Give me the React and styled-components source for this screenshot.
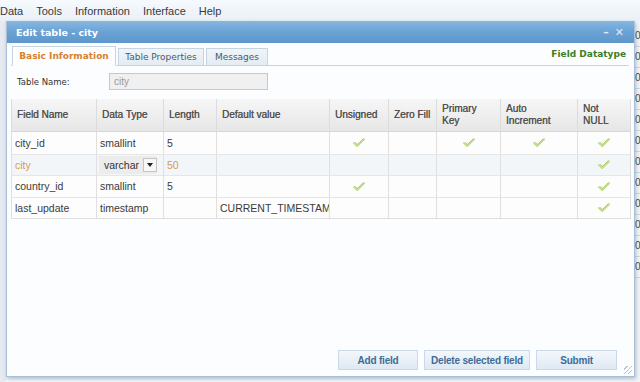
import React from 'react';
import styled, {createGlobalStyle} from 'styled-components';

const GlobalStyle = createGlobalStyle`
  html, body { margin: 0; padding: 0; }
  body {
    font-family: "Liberation Sans", Arial, sans-serif;
    background: #eef3f8;
    overflow: hidden;
  }
`

const Page = styled.div`
  width: 640px;
  height: 382px;
  display: flex;
  flex-direction: column;
  overflow: hidden;
  background: #f4f7fa;
`

const MenuBar = styled.div`
  height: 21px;
  flex: none;
  display: flex;
  align-items: center;
  gap: 13px;
  background: linear-gradient(#f7fafd, #e9f0f7);
  font-size: 11px;
  color: #3a3a3a;
  span { white-space: nowrap; }
`

const Workspace = styled.div`
  flex: 1;
  display: flex;
  min-height: 0;
`

const SideStrip = styled.div`
  width: ${p => p.$w}px;
  flex: none;
  background: ${p => p.$bg};
  display: flex;
  flex-direction: column;
  padding-top: ${p => p.$pt || 0}px;
  font-size: 10px;
  color: #444;
  overflow: hidden;
`

const StripCell = styled.div`
  height: 20px;
  line-height: 20px;
  border-bottom: 1px solid #cfd8e2;
  white-space: nowrap;
`

const Dialog = styled.div`
  position: relative;
  width: 627px;
  flex: none;
  height: 355px;
  display: flex;
  flex-direction: column;
  border: 1px solid #a9bfd6;
  border-top: none;
  background: #fbfdfe;
  box-shadow: 1px 2px 4px rgba(60, 80, 100, 0.35);
`

const TitleBar = styled.div`
  height: 22px;
  flex: none;
  display: flex;
  align-items: center;
  justify-content: space-between;
  padding: 0 10px 0 9px;
  background: linear-gradient(#86b7e0, #6aa2d4 50%, #5d97cb);
  color: #fff;
  font-family: "DejaVu Sans", sans-serif;
  font-weight: bold;
  font-size: 9.5px;
`

const WinButtons = styled.div`
  display: flex;
  gap: 6px;
  font-size: 11px;
  color: #dfeefa;
`

const Body = styled.div`
  flex: 1;
  display: flex;
  flex-direction: column;
  padding: 0 5px 0 4px;
  min-height: 0;
`

const TabStrip = styled.div`
  height: 22px;
  flex: none;
  display: flex;
  align-items: flex-end;
  border-bottom: 1px solid #c6d3e0;
  padding-left: 1px;
`

const Tab = styled.div`
  height: ${p => p.$active ? 20 : 18}px;
  width: ${p => p.$w}px;
  margin-right: 2px;
  margin-bottom: -1px;
  display: flex;
  align-items: center;
  justify-content: center;
  box-sizing: border-box;
  border: 1px solid #c6d3e0;
  border-bottom: ${p => p.$active ? '1px solid #fbfdfe' : '1px solid #c6d3e0'};
  background: ${p => p.$active ? '#fbfdfe' : 'linear-gradient(#f1f5f9, #e4ebf2)'};
  color: ${p => p.$active ? '#d9822b' : '#4a5a6a'};
  font-family: "DejaVu Sans", sans-serif;
  font-size: 9px;
  font-weight: ${p => p.$active ? 'bold' : 'normal'};
`

const TabTitle = styled.div`
  margin-left: auto;
  align-self: center;
  padding-right: 3px;
  color: #3d7d28;
  font-family: "DejaVu Sans", sans-serif;
  font-weight: bold;
  font-size: 9px;
`

const FormRow = styled.div`
  display: flex;
  align-items: center;
  margin-top: 7px;
  padding-left: 6px;
  height: 17px;
`

const Label = styled.label`
  width: 92px;
  font-family: "DejaVu Sans", sans-serif;
  font-size: 8.5px;
  color: #333;
`

const TextInput = styled.div`
  width: 159px;
  height: 17px;
  box-sizing: border-box;
  border: 1px solid #c8c8c8;
  background: #f0f0f0;
  color: #999;
  font-size: 10px;
  line-height: 15px;
  padding-left: 4px;
`

const Grid = styled.div`
  margin-top: 9px;
  width: 619px;
  display: grid;
  grid-template-columns: 85px 67px 53px 113px 59px 48px 64px 77px 53px;
  border-right: 1px solid #dedede;
  border-bottom: 1px solid #dedede;
`

const HeadCell = styled.div`
  height: 33px;
  box-sizing: border-box;
  display: flex;
  align-items: center;
  padding: 0 4px 0 5px;
  border-left: 1px solid #dcdcdc;
  border-bottom: 1px solid #d6d6d6;
  background: linear-gradient(#f6f6f6, #e6e6e6);
  color: #4e4e4e;
  font-size: 10px;
  line-height: 12px;
  white-space: pre;
  text-shadow: 0.3px 0 0 #6a6a6a;
`

const Cell = styled.div`
  height: 21.5px;
  box-sizing: border-box;
  display: flex;
  align-items: center;
  justify-content: ${p => p.$center ? 'center' : 'flex-start'};
  padding: 0 3px;
  border-left: 1px solid #e0e0e0;
  border-top: ${p => p.$first ? 'none' : '1px solid #e6e6e6'};
  background: ${p => p.$sel ? '#f3f6f9' : '#fdfdfd'};
  color: ${p => p.$sel ? '#d49a55' : '#3a3a3a'};
  font-size: 10.5px;
  white-space: nowrap;
  overflow: hidden;
`

const Combo = styled.div`
  display: flex;
  align-items: center;
  height: 18px;
  margin-left: -1px;
  background: #ececec;
  color: #333;
  padding-left: 5px;
`

const ComboButton = styled.div`
  width: 14px;
  height: 14px;
  margin-left: 4px;
  box-sizing: border-box;
  border: 1px solid #c4c4c4;
  background: #f7f7f7;
  display: flex;
  align-items: center;
  justify-content: center;
`

const Footer = styled.div`
  margin-top: auto;
  display: flex;
  justify-content: flex-end;
  gap: 6px;
  padding: 0 12px 6px 0;
`

const Button = styled.button`
  width: ${p => p.$w}px;
  height: 20px;
  border: 1px solid #cbd9e7;
  background: linear-gradient(#f2f7fb, #dfe9f3);
  color: #3e6c97;
  font-family: "Liberation Sans", Arial, sans-serif;
  font-size: 10px;
  letter-spacing: -0.2px;
  font-weight: bold;
  white-space: nowrap;
  padding: 0;
`

const Grip = styled.div`
  position: absolute;
  right: 2px;
  bottom: 2px;
  width: 8px;
  height: 8px;
  background: repeating-linear-gradient(135deg, transparent 0 2px, #b8c4cf 2px 3px);
`

const Check = () => (
  <svg width="12" height="9" viewBox="0 0 12 9">
    <path d="M1 5 L4.2 8 L11 1.3" fill="none" stroke="#c3dd8a" strokeWidth="2" strokeLinecap="round" strokeLinejoin="round"/>
    <path d="M2.6 4.6 L4.6 6.4 L10 1" fill="none" stroke="#9fc25a" strokeWidth="0.8" strokeLinecap="round"/>
  </svg>
)

const Arrow = () => (
  <svg width="6" height="4" viewBox="0 0 6 4"><path d="M0 0 H6 L3 4 Z" fill="#222"/></svg>
)

const columns = ['Field Name', 'Data Type', 'Length', 'Default value', 'Unsigned', 'Zero Fill', 'Primary\nKey', 'Auto\nIncrement', 'Not\nNULL']

const rows = [
  {name: 'city_id', type: 'smallint', len: '5', def: '', flags: [1, 0, 1, 1, 1]},
  {name: 'city', type: 'varchar', len: '50', def: '', flags: [0, 0, 0, 0, 1], sel: true},
  {name: 'country_id', type: 'smallint', len: '5', def: '', flags: [1, 0, 0, 0, 1]},
  {name: 'last_update', type: 'timestamp', len: '', def: 'CURRENT_TIMESTAMP', flags: [0, 0, 0, 0, 1]},
]

const menu = ['Data', 'Tools', 'Information', 'Interface', 'Help']

export default function App() {
  return (
    <Page>
      <GlobalStyle/>
      <MenuBar>
        {menu.map(m => <span key={m}>{m}</span>)}
      </MenuBar>
      <Workspace>
        <SideStrip $w={6} $bg="#e6ebf1"/>
        <Dialog>
          <TitleBar>
            <span>Edit table - city</span>
            <WinButtons><span>–</span><span>✕</span></WinButtons>
          </TitleBar>
          <Body>
            <TabStrip>
              <Tab $active $w={104}>Basic Information</Tab>
              <Tab $w={86}>Table Properties</Tab>
              <Tab $w={62}>Messages</Tab>
              <TabTitle>Field Datatype</TabTitle>
            </TabStrip>
            <FormRow>
              <Label>Table Name:</Label>
              <TextInput>city</TextInput>
            </FormRow>
            <Grid>
              {columns.map(c => <HeadCell key={c}>{c}</HeadCell>)}
              {rows.map((r, i) => (
                <React.Fragment key={r.name}>
                  <Cell $first={i === 0} $sel={r.sel}>{r.name}</Cell>
                  <Cell $first={i === 0} $sel={r.sel}>
                    {r.sel
                      ? <Combo>{r.type}<ComboButton><Arrow/></ComboButton></Combo>
                      : r.type}
                  </Cell>
                  <Cell $first={i === 0} $sel={r.sel}>{r.len}</Cell>
                  <Cell $first={i === 0} $sel={r.sel}>{r.def}</Cell>
                  {r.flags.map((f, j) => (
                    <Cell key={j} $first={i === 0} $sel={r.sel} $center>{f ? <Check/> : null}</Cell>
                  ))}
                </React.Fragment>
              ))}
            </Grid>
            <Footer>
              <Button $w={80}>Add field</Button>
              <Button $w={106}>Delete selected field</Button>
              <Button $w={81}>Submit</Button>
            </Footer>
          </Body>
          <Grip/>
        </Dialog>
        <SideStrip $w={7} $bg="#f2f5f8" $pt={5}>
          {Array.from({length: 12}).map((_, i) => <StripCell key={i}>0</StripCell>)}
        </SideStrip>
      </Workspace>
    </Page>
  );
}
